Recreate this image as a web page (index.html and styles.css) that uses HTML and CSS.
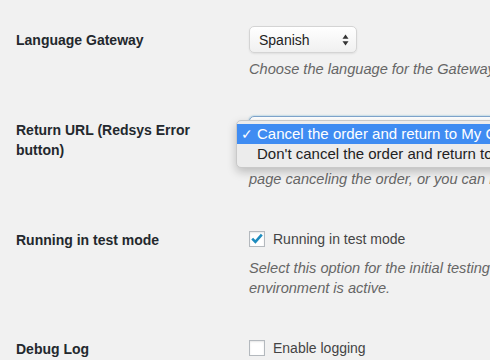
FILE: index.html
```
<!DOCTYPE html>
<html lang="en">
<head>
<meta charset="UTF-8">
<link rel="stylesheet" href="styles.css">
<title>Redsys Gateway Settings</title>
</head>
<body>

<div class="form-table">

<div class="row">
	<div class="label">Language Gateway</div>
	<div class="field">
		<div class="select">
			<span>Spanish</span>
			<svg class="arrows" width="7" height="12" viewBox="0 0 7 12">
				<path d="M3.5 0.5 L6.5 4.8 L0.5 4.8 Z" fill="#333"/>
				<path d="M3.5 11.5 L6.5 7.2 L0.5 7.2 Z" fill="#333"/>
			</svg>
		</div>
		<p class="description">Choose the language for the Gateway. Not all banks accept all languages.</p>
	</div>
</div>

<div class="row">
	<div class="label">Return URL (Redsys Error<br>button)</div>
	<div class="field">
		<div class="select-wrap">
			<div class="select wide focus"></div>
			<ul class="popup">
				<li class="selected"><span class="tick">&#10003;</span>Cancel the order and return to My Cart page</li>
				<li>Don't cancel the order and return to the Checkout page</li>
			</ul>
		</div>
		<p class="description">When the user clicks on the error button in Redsys, you can return him to the My Cart<br>page canceling the order, or you can return him to the checkout page without canceling it.</p>
	</div>
</div>

<div class="row">
	<div class="label">Running in test mode</div>
	<div class="field">
		<label class="check">
			<span class="box">
				<svg width="16" height="16" viewBox="0 0 16 16">
					<path d="M3.2 7.6 L6.4 10.8 L12.8 3.6" fill="none" stroke="#1e8cbe" stroke-width="2.6"/>
				</svg>
			</span>
			Running in test mode
		</label>
		<p class="description desc-check">Select this option for the initial testing required by Redsys, deselect this option once you pass the required test phase and your production<br>environment is active.</p>
	</div>
</div>

<div class="row">
	<div class="label">Debug Log</div>
	<div class="field">
		<label class="check">
			<span class="box"></span>
			Enable logging
		</label>
	</div>
</div>

</div>

</body>
</html>
```

FILE: styles.css
```
* {
	box-sizing: border-box;
}

html, body {
	margin: 0;
	padding: 0;
	overflow: hidden;
}

body {
	background: #f1f1f1;
	color: #444;
	font: 14px "Liberation Sans", Arial, sans-serif;
	width: 490px;
	height: 360px;
}

.form-table {
	width: 1100px;
	padding: 10px 0 0 16px;
}

.row {
	display: grid;
	grid-template-columns: 233px 1fr;
}

.label {
	color: #23282d;
	font-weight: bold;
	line-height: 20px;
	padding-top: 20px;
}

.field {
	padding: 16px 0 21px 0;
}

.select {
	display: flex;
	align-items: center;
	justify-content: space-between;
	width: 108px;
	height: 27px;
	padding: 0 7px 0 9px;
	background: linear-gradient(#ffffff, #f0f0f0);
	border: 1px solid #d4d4d4;
	border-radius: 5px;
	box-shadow: 0 1px 2px rgba(0,0,0,0.08);
	color: #222;
}

.arrows {
	margin-top: 1px;
}

.select-wrap {
	position: relative;
}

.select.wide {
	width: 420px;
	height: 27px;
}

.select.focus {
	border-color: #7ea4cc;
	box-shadow: 0 0 2px rgba(30,140,190,0.6);
}

.popup {
	position: absolute;
	left: -13px;
	top: 4px;
	width: 400px;
	margin: 0;
	padding: 3px 0 3px 0;
	list-style: none;
	background: #ececec;
	border: 1px solid #c9c9c9;
	border-radius: 5px;
	box-shadow: 0 4px 10px rgba(0,0,0,0.22);
	font-size: 15px;
	color: #222;
}

.popup li {
	height: 20px;
	line-height: 20px;
	padding-left: 20px;
	white-space: nowrap;
}

.popup li.selected {
	background: #3f8cf2;
	color: #fff;
}

.tick {
	display: inline-block;
	width: 16px;
	margin-left: -16px;
	font-size: 14px;
}

.description {
	margin: 6px 0 0 0;
	color: #666;
	font-size: 14.6px;
	font-style: italic;
	line-height: 20px;
	white-space: nowrap;
}

.desc-check {
	margin-top: 9px;
}

.check {
	display: flex;
	align-items: center;
	height: 20px;
	margin-top: 3px;
	color: #444;
}

.box {
	width: 16px;
	height: 16px;
	margin-right: 8px;
	background: #fff;
	border: 1px solid #b4b9be;
	box-shadow: inset 0 1px 2px rgba(0,0,0,0.1);
}

.box svg {
	display: block;
	margin: -1px 0 0 -1px;
}
```
